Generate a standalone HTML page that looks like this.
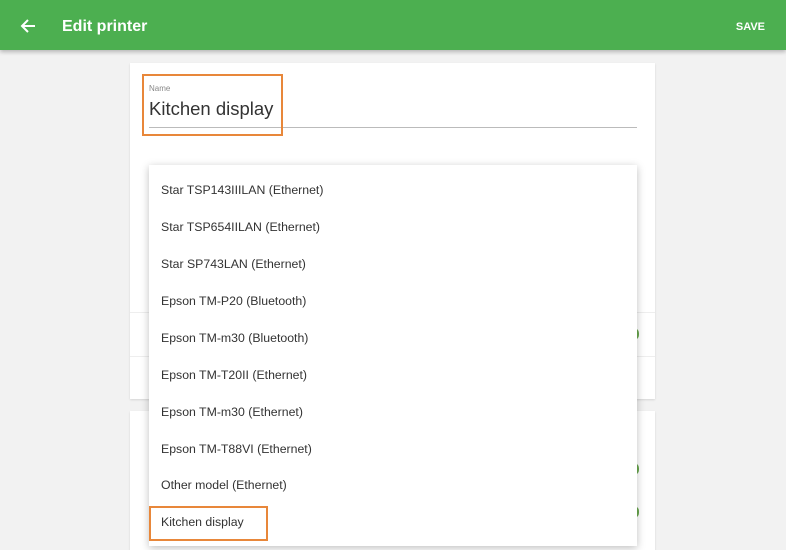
<!DOCTYPE html>
<html><head><style>
html,body{margin:0;width:786px;height:550px;overflow:hidden}
body{background:#f2f2f2;font-family:"Liberation Sans",sans-serif;position:relative}
.hdr{position:absolute;left:0;top:0;width:786px;height:50px;background:#4caf50;box-shadow:0 2px 4px rgba(0,0,0,.25)}
.hdr .t{position:absolute;left:62px;top:18px;color:#fff;font-size:16px;font-weight:bold}
.hdr .s{position:absolute;right:21px;top:21px;color:#fff;font-size:11px;font-weight:bold}
.card{position:absolute;left:130px;width:525px;background:#fff;box-shadow:0 1px 2px rgba(0,0,0,.12)}
.menu{position:absolute;left:149px;top:165px;width:488px;height:381px;background:#fff;box-shadow:0 2px 8px rgba(0,0,0,.25)}
.it{position:absolute;left:12px;font-size:12.3px;color:#333}
.box{position:absolute;border:2px solid #e8873a}
.tg{position:absolute;left:634px;width:5px;height:12px;background:#6aa84f;border-radius:0 6px 6px 0}
</style></head><body>
<div class="hdr">
<svg style="position:absolute;left:20px;top:18px" width="16" height="16" viewBox="0 0 16 16"><path d="M15 8H2M8 2L2 8l6 6" stroke="#fff" stroke-width="2" fill="none"/></svg>
<div class="t">Edit printer</div><div class="s">SAVE</div></div>
<div class="card" style="top:63px;height:336px">
<div style="position:absolute;left:0;right:0;top:249px;border-top:1px solid #eee"></div>
<div style="position:absolute;left:0;right:0;top:293px;border-top:1px solid #eee"></div>
</div>
<div class="card" style="top:411px;height:150px"></div>
<div class="tg" style="top:328px"></div>
<div class="tg" style="top:463px"></div>
<div class="tg" style="top:506px"></div>
<div style="position:absolute;left:149px;top:84px;font-size:8px;color:#888">Name</div>
<div style="position:absolute;left:149px;top:98px;font-size:18.5px;color:#333">Kitchen display</div>
<div style="position:absolute;left:149px;top:127px;width:488px;border-top:1px solid #bbb"></div>
<div class="box" style="left:142px;top:74px;width:137px;height:58px"></div>
<div class="menu">
<div class="it" style="top:18px">Star TSP143IIILAN (Ethernet)</div>
<div class="it" style="top:55px">Star TSP654IILAN (Ethernet)</div>
<div class="it" style="top:92px">Star SP743LAN (Ethernet)</div>
<div class="it" style="top:129px">Epson TM-P20 (Bluetooth)</div>
<div class="it" style="top:166px">Epson TM-m30 (Bluetooth)</div>
<div class="it" style="top:203px">Epson TM-T20II (Ethernet)</div>
<div class="it" style="top:240px">Epson TM-m30 (Ethernet)</div>
<div class="it" style="top:277px">Epson TM-T88VI (Ethernet)</div>
<div class="it" style="top:313px">Other model (Ethernet)</div>
<div class="it" style="top:350px">Kitchen display</div>
</div>
<div class="box" style="left:149px;top:506px;width:115px;height:31px"></div>
</body></html>
